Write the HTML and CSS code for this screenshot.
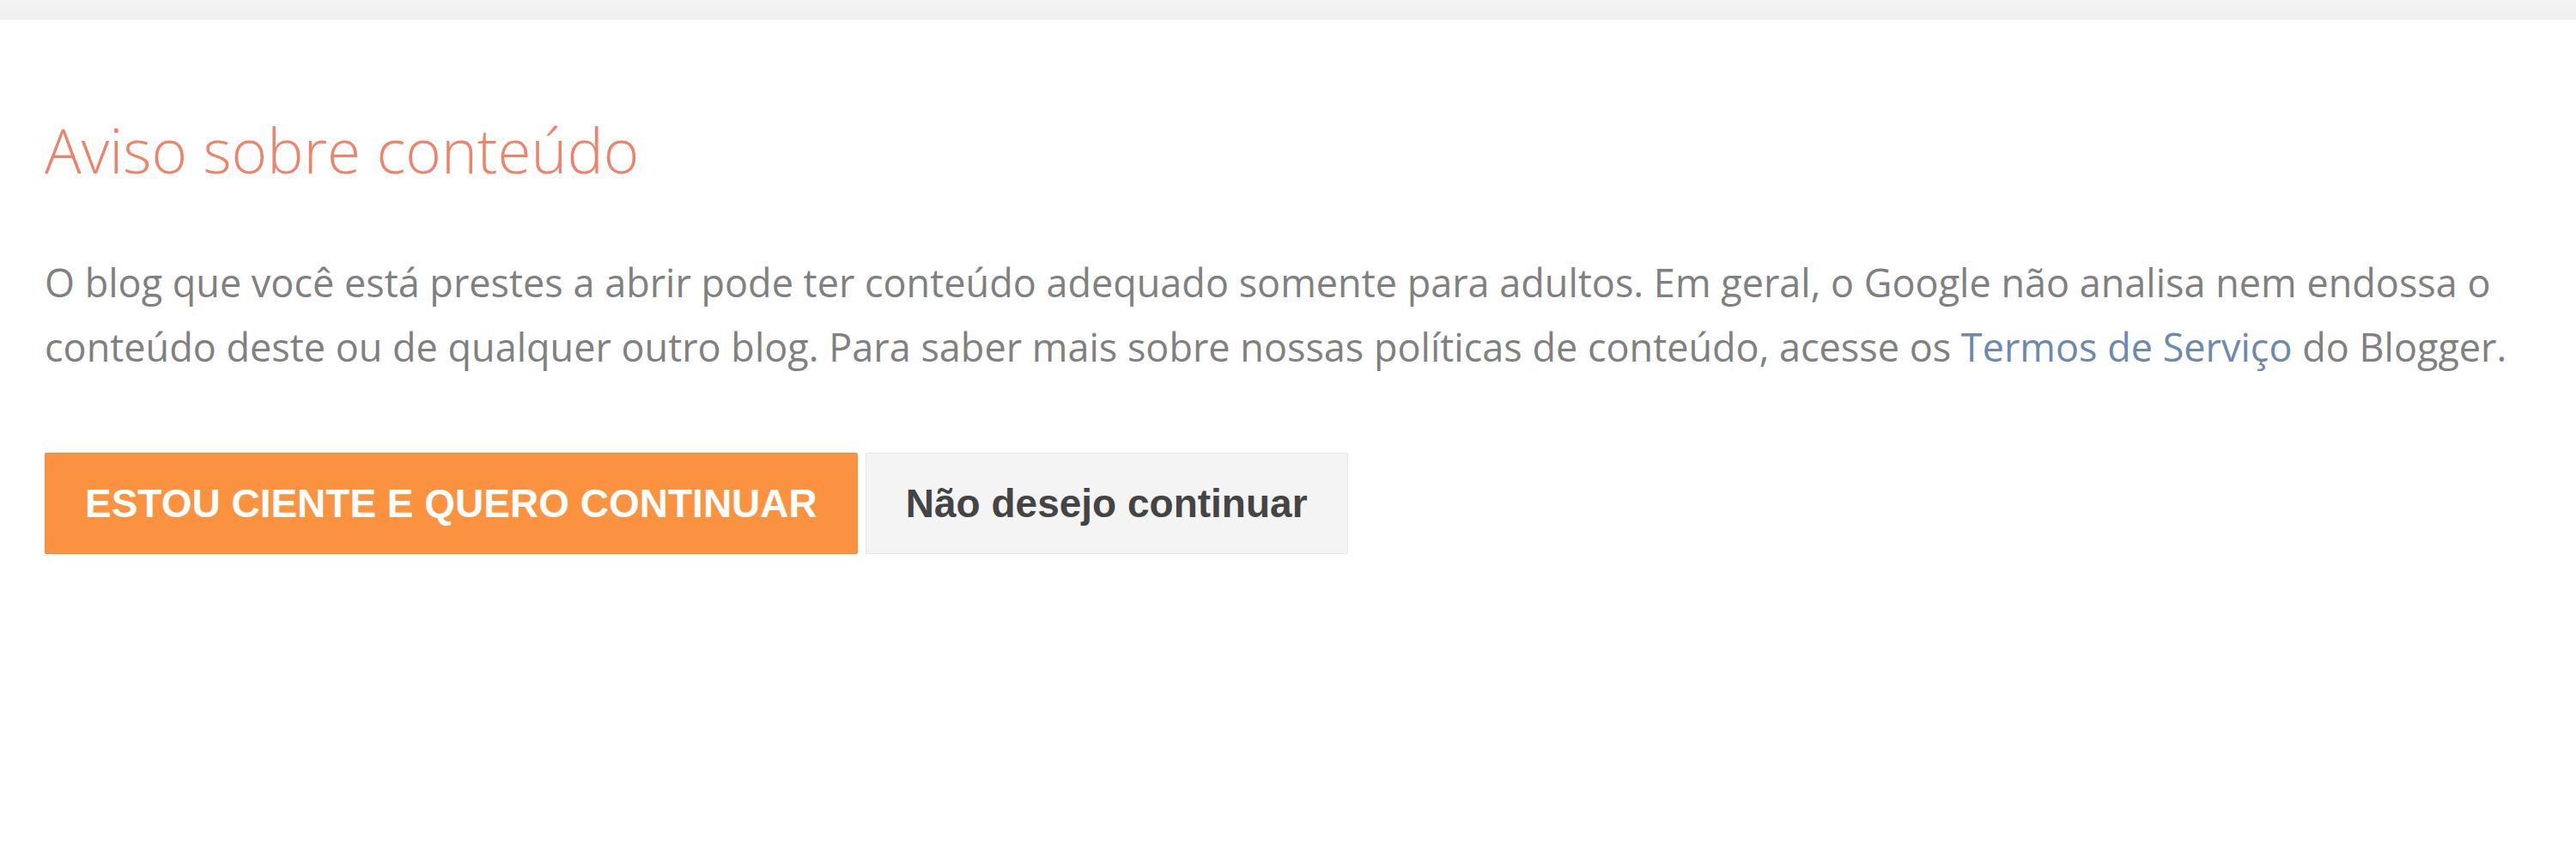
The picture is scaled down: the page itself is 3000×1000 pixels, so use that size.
FILE: index.html
```html
<!DOCTYPE html>
<html lang="pt-BR">
<head>
    <meta charset="UTF-8">
    <title>Aviso sobre conteúdo</title>
    <link rel="stylesheet" href="styles.css">
</head>
<body>
    <div class="topbar"></div>
    <div class="interstitial">
        <h1>Aviso sobre conteúdo</h1>
        <p class="notice">O blog que você está prestes a abrir pode ter conteúdo adequado somente para adultos. Em geral, o Google não analisa nem endossa o conteúdo deste ou de qualquer outro blog. Para saber mais sobre nossas políticas de conteúdo, acesse os <a href="#">Termos de Serviço</a> do Blogger.</p>
        <div class="actions">
            <button class="btn btn-continue">ESTOU CIENTE E QUERO CONTINUAR</button>
            <button class="btn btn-back">Não desejo continuar</button>
        </div>
    </div>
</body>
</html>
```

FILE: styles.css
```css
body {
    margin: 0;
    padding: 0;
    background-color: #fff;
    font-family: "Open Sans", Arial, sans-serif;
    color: #808080;
}

.topbar {
    height: 23px;
    background: linear-gradient(#f4f4f4, #efefef);
}

.interstitial {
    width: 2890px;
    padding: 0 52px;
}

h1 {
    font-size: 71px;
    font-weight: 300;
    color: #ef8268;
    margin: 108px 0 0 0;
    line-height: 88px;
}

.notice {
    font-size: 45px;
    line-height: 75px;
    margin: 72px 0 0 0;
}

.notice a {
    color: #6d89ae;
    text-decoration: none;
}

.actions {
    display: flex;
    gap: 9px;
    margin-top: 86px;
}

.btn {
    font-family: "Liberation Sans", Arial, sans-serif;
    font-weight: bold;
    font-size: 46px;
    height: 118px;
    padding: 0 46px;
    border-radius: 2px;
    cursor: pointer;
}

.btn-continue {
    background-color: #fa923f;
    border: 1px solid #f28a36;
    color: #fff;
}

.btn-back {
    background-color: #f4f4f4;
    border: 1px solid #e6e6e6;
    color: #444;
}
```
